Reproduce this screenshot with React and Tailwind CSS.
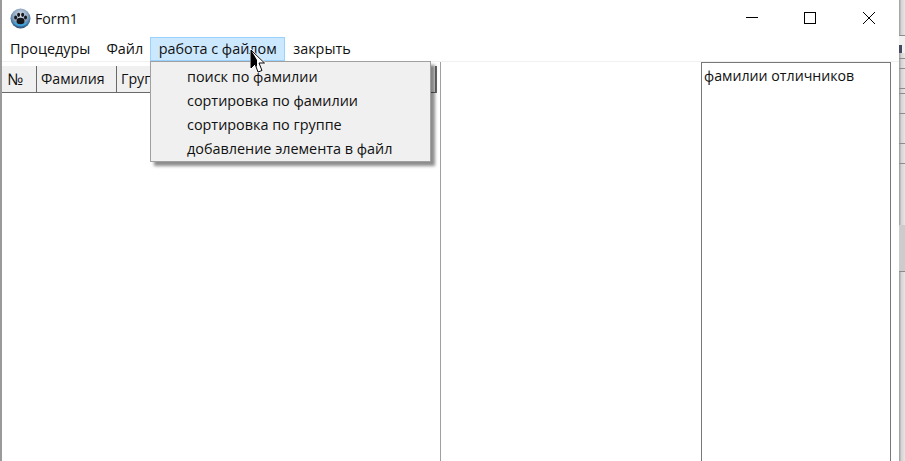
function PawIcon() {
  return (
    <svg width="21" height="21" viewBox="0 0 21 21">
      <defs>
        <radialGradient id="ball" cx="50%" cy="35%" r="65%">
          <stop offset="0%" stopColor="#dfe6ee" />
          <stop offset="55%" stopColor="#8fa7c0" />
          <stop offset="85%" stopColor="#3d6f9f" />
          <stop offset="100%" stopColor="#2b4a6b" />
        </radialGradient>
      </defs>
      <circle cx="10.5" cy="10.5" r="10" fill="url(#ball)" />
      <path d="M3 14 A9 9 0 0 0 18 14 A12 8 0 0 1 3 14Z" fill="#3ba7e0" />
      <ellipse cx="10.5" cy="13" rx="4" ry="3.2" fill="#15171c" />
      <ellipse cx="5.6" cy="9.6" rx="1.5" ry="2" fill="#15171c" />
      <ellipse cx="8.6" cy="6.8" rx="1.5" ry="2.1" fill="#15171c" />
      <ellipse cx="12.6" cy="6.8" rx="1.5" ry="2.1" fill="#15171c" />
      <ellipse cx="15.5" cy="9.6" rx="1.5" ry="2" fill="#15171c" />
    </svg>
  );
}

function WindowButtons() {
  return (
    <div className="flex items-start text-black pr-[7px]">
      <svg width="58" height="37" viewBox="0 0 58 37">
        <path d="M28 17.5H40" stroke="#000" strokeWidth="1" />
      </svg>
      <svg width="58" height="37" viewBox="0 0 58 37">
        <rect x="28.5" y="12.5" width="11" height="11" fill="none" stroke="#000" strokeWidth="1" />
      </svg>
      <svg width="58" height="37" viewBox="0 0 58 37">
        <path d="M29 12L41 24M41 12L29 24" stroke="#000" strokeWidth="1" fill="none" />
      </svg>
    </div>
  );
}

function MenuBar() {
  return (
    <div className="h-[24px] flex items-stretch text-[14.4px] text-[#111]">
      <span className="px-[8px] pb-[1px] flex items-center">Процедуры</span>
      <span className="pl-[8px] pr-[7px] pb-[1px] flex items-center">Файл</span>
      <span className="w-[135px] pb-[1px] justify-center bg-[#cce8ff] border border-[#99d1ff] flex items-center">
        работа с файлом
      </span>
      <span className="px-[8px] pb-[1px] flex items-center">закрыть</span>
    </div>
  );
}

function Grid() {
  return (
    <div className="w-[439px] border-r border-[#a0a0a0] pt-[4px] pr-[3px]">
      <div className="flex h-[27px] bg-[#f0f0f0] border-b border-[#696969] border-r-2 border-r-[#696969] text-[14.2px] text-[#111]">
        <div className="w-[35px] pl-[5px] pb-[1px] border-r border-[#696969] flex items-center text-[16px]">№</div>
        <div className="w-[80px] pl-[4px] pb-[1px] border-r border-[#696969] flex items-center">Фамилия</div>
        <div className="flex-1 pl-[4px] pb-[1px] flex items-center">Группа</div>
      </div>
    </div>
  );
}

function Dropdown() {
  const items = [
    "поиск по фамилии",
    "сортировка по фамилии",
    "сортировка по группе",
    "добавление элемента в файл",
  ];
  return (
    <div className="absolute left-[150px] top-[61px] w-[281px] h-[101px] bg-[#f0f0f0] border border-[#a0a0a0] py-[3px] shadow-[4px_4px_3px_rgba(0,0,0,0.45)] text-[14.4px] text-[#111]">
      {items.map((text) => (
        <div key={text} className="h-[24px] pl-[36px] pb-[1px] flex items-center">
          {text}
        </div>
      ))}
    </div>
  );
}

function Cursor() {
  return (
    <svg className="absolute left-[248px] top-[48px]" width="20" height="28" viewBox="0 0 20 28">
      <path d="M3 2V20L7 16L10 24L14 22.5L11 15H16.5Z" fill="#fff" stroke="#fff" strokeWidth="2" />
      <path d="M3 2V20L7 16L9 19V12Z" fill="#000" />
      <path d="M3 2L16.5 15H11L14 22.5L10 24L7 16L3 20Z" fill="none" stroke="#000" strokeWidth="1" />
    </svg>
  );
}

function RightStrip() {
  return (
    <svg width="6" height="461" viewBox="0 0 6 461" className="shrink-0">
      <defs>
        <linearGradient id="edge" x1="0" x2="1" y1="0" y2="0">
          <stop offset="0%" stopColor="#9a9a9a" />
          <stop offset="40%" stopColor="#d4d4d4" />
          <stop offset="100%" stopColor="#e6e6e6" />
        </linearGradient>
      </defs>
      <rect width="6" height="461" fill="url(#edge)" />
      <rect y="35" width="6" height="18" fill="#f0f0f0" />
      <rect y="225" width="6" height="47" fill="#cccccc" />
      {[35, 58, 68, 88, 93, 113, 143, 163, 271].map((y) => (
        <rect key={y} y={y} width="6" height="1" fill="#8c8c8c" />
      ))}
      <rect x="0" y="45" width="3" height="8" fill="#444a60" />
    </svg>
  );
}

export default function App() {
  return (
    <div className="relative w-[905px] h-[461px] overflow-hidden flex bg-white font-['Open_Sans','Noto_Sans',sans-serif]">
      <div className="w-[2px] bg-[#9a9a9a] shrink-0" />
      <div className="flex-1 flex flex-col min-w-0">
        <div className="h-[37px] flex justify-between">
          <div className="flex items-center gap-[4px] pl-[8px] text-[14.2px] text-[#111]">
            <PawIcon />
            <span>Form1</span>
          </div>
          <WindowButtons />
        </div>
        <div className="border-b border-[#f0f0f0]">
          <MenuBar />
        </div>
        <div className="flex-1 flex">
          <Grid />
          <div className="w-[260px]" />
          <div className="w-[190px] border-x border-t border-[#787878] pl-[2px] pt-[3px] text-[14.2px] leading-[20px] text-[#111]">
            фамилии отличников
          </div>
        </div>
      </div>
      <RightStrip />
      <Dropdown />
      <Cursor />
    </div>
  );
}
